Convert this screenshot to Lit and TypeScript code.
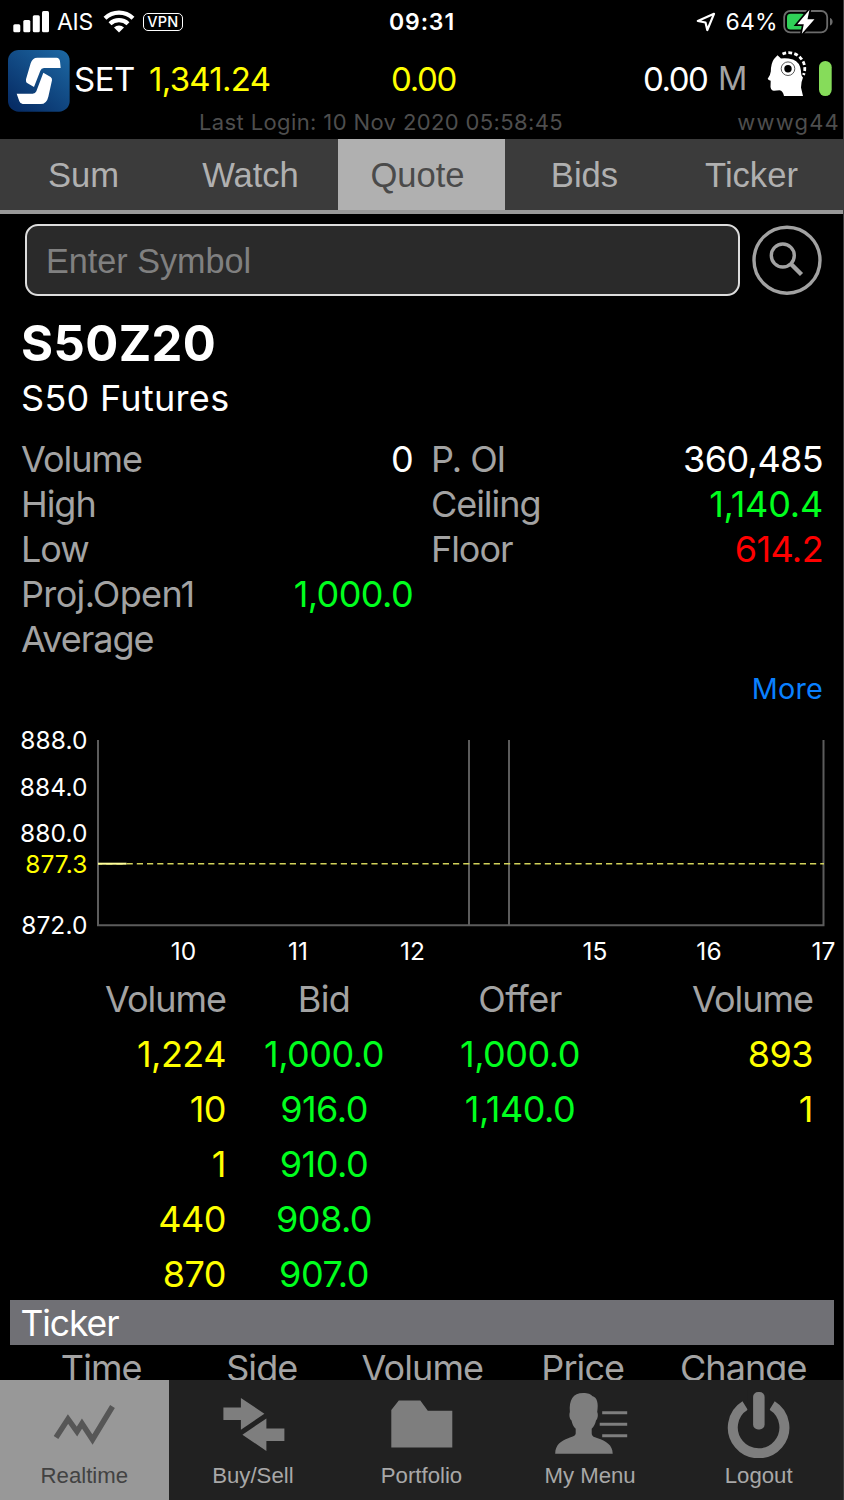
import { LitElement, html, css, svg } from "lit";
import { customElement } from "lit/decorators.js";

const tabs = ["Sum", "Watch", "Quote", "Bids", "Ticker"];

const leftStats = [
  ["Volume", "0", "white"],
  ["High", "", ""],
  ["Low", "", ""],
  ["Proj.Open1", "1,000.0", "up"],
  ["Average", "", ""],
];
const rightStats = [
  ["P. OI", "360,485", "white"],
  ["Ceiling", "1,140.4", "up loose"],
  ["Floor", "614.2", "down"],
];

const depth = [
  ["1,224", "1,000.0", "1,000.0", "893"],
  ["10", "916.0", "1,140.0", "1"],
  ["1", "910.0", "", ""],
  ["440", "908.0", "", ""],
  ["870", "907.0", "", ""],
];

const yTicks: [string, number, string][] = [
  ["888.0", 740.5, "#fff"],
  ["884.0", 787, "#fff"],
  ["880.0", 833, "#fff"],
  ["877.3", 864.5, "#ffff00"],
  ["872.0", 925.5, "#fff"],
];
const xTicks: [string, number][] = [
  ["10", 183.5],
  ["11", 298],
  ["12", 412.5],
  ["15", 595],
  ["16", 709],
  ["17", 823.5],
];

const navIcons = {
  realtime: svg`<path d="M56 1437.5L68 1419L77 1431.5L82 1423.5L92.500 1439.500L112.500 1406.500" fill="none" stroke="#565656" stroke-width="5.500"/>`,
  trade: svg`<path fill="#7e7e7e" d="M223 1407.500h17.500v-9.500l23.500 15.700l-23.500 16v-9.700h-17.500zM284 1428.500h-18v-10l-24 16.200l24 16.200v-10h18z"/>`,
  folder: svg`<path fill="#7e7e7e" d="M391.500 1447.500v-37.500l7.500-9.500h21.500l7.500 10.200h24.500v36.800z"/>`,
  user: svg`<path fill="#7e7e7e" d="M555 1453.700c0-9 6-13 13-15.500c5-1.800 7.500-2.500 7.500-5v-4.500c-2.500-2.200-3.500-5-4.200-8.200c-2-1.500-2.600-6-1.600-8.500c-1-12 3-19 13.300-19c5 0 7.500 1.200 9 3c5 1.500 6.500 7 5 16c1.300 2.500.5 7-1.200 8.500c-.8 3.500-2 5.800-4.300 8.200v4.500c0 3 2 3.700 6 5c8 2.700 15 6.500 15 15.500z"/><path stroke="#7e7e7e" stroke-width="3" d="M602 1412.700h25M599.500 1424.200h27.500M602 1435.700h25"/>`,
  power: svg`<path fill="none" stroke="#7e7e7e" stroke-width="10" d="M745.500 1405.500a25.800 25.800 0 1 0 27 0"/><path fill="#212121" d="M748 1390h22v28h-22z"/><rect x="753.500" y="1392" width="11.500" height="37.500" rx="5" fill="#7e7e7e"/>`,
};
const nav: [string, string, unknown][] = [
  ["Realtime", "0 1390 168 68", navIcons.realtime],
  ["Buy/Sell", "168.600 1390 168 68", navIcons.trade],
  ["Portfolio", "337.200 1390 168 68", navIcons.folder],
  ["My Menu", "505.800 1390 168 68", navIcons.user],
  ["Logout", "674.400 1390 168 68", navIcons.power],
];

@customElement("app-root")
export class AppRoot extends LitElement {
  static styles = css`
    :host { display: block; background: #000; }
    .screen {
      width: 844px; height: 1500px; box-sizing: border-box; overflow: hidden; border-right: 1px solid #3c3c3c;
      display: flex; flex-direction: column; background: #000; color: #fff;
      font-family: Inter, "Liberation Sans", sans-serif; font-size: 36px; white-space: nowrap;
    }
    svg { display: block; flex: none; }
    .status { height: 43px; display: grid; grid-template-columns: 1fr 1fr 1fr; align-items: center; font-size: 23px; flex: none; }
    .carrier { display: flex; align-items: center; padding-left: 13px; }
    .ais { margin-left: 8px; letter-spacing: -0.300px; }
    .wifi { margin-left: 10px; }
    .vpn { margin-left: 8px; width: 38px; height: 16px; border: 1.500px solid #fff; border-radius: 5px; font-size: 14.500px; line-height: 16px; font-weight: 500; text-align: center; letter-spacing: 0.300px; }
    .clock { padding-left: 1px; text-align: center; font-weight: 600; letter-spacing: 0.900px; }
    .power { display: flex; align-items: center; justify-content: flex-end; padding-right: 10px; }
    .pct { margin: 0 5px 0 9px; letter-spacing: 0.300px; }
    .market { height: 71px; display: flex; align-items: center; font-size: 33px; padding-left: 8px; flex: none; }
    .market span { line-height: 72px; }
    .logo { margin-top: 5px; }
    .head-icon { margin-bottom: 8px; }
    .set { margin-left: 4px; width: 75px; letter-spacing: -0.500px; }
    .index { width: 242px; color: #ffff00; letter-spacing: -0.700px; }
    .change { width: 252px; color: #ffff00; letter-spacing: -1.300px; }
    .value { width: 75px; letter-spacing: -1.500px; }
    .unit { width: 49px; color: #a3a3a3; font-size: 32.500px; }
    .login { height: 25px; display: flex; justify-content: space-between; padding: 0 3px 0 199px; line-height: 16px; font-size: 22px; color: #4e4e4e; flex: none; }
    .login-time { letter-spacing: 0.380px; }
    .host { letter-spacing: 1.200px; }
    .tabs { height: 71px; padding-left: 4px; background: #3b3b3b; border-bottom: 4px solid #989898; display: flex; font: 34.600px/72px "Liberation Sans", sans-serif; color: #b0b0b0; flex: none; }
    .tab { height: 71px; width: 159px; padding-right: 8px; text-align: center; }
    .tab.on { background: #b0b0b0; color: #4a4a4a; }
    .search { display: flex; align-items: center; padding: 10px 0 0 24.500px; gap: 12px; flex: none; }
    .field { width: 692px; height: 68px; padding-left: 19.500px; border: 2px solid #ddd; border-radius: 13px; background: #2a2a2a; color: #808080; font: 34.200px/70px "Liberation Sans", sans-serif; }
    .symbol { margin: 20px 0 0 21px; height: 56px; line-height: 56px; font-size: 49px; font-weight: 700; letter-spacing: 0.400px; flex: none; }
    .name { margin-left: 21px; height: 53px; line-height: 53px; letter-spacing: 0.300px; flex: none; }
    .stats { margin-top: 12px; padding: 0 21px; display: grid; grid-template-columns: 392px 392px; column-gap: 18px; height: 225px; flex: none; }
    .stat { display: flex; justify-content: space-between; height: 45px; line-height: 45px; color: #a3a3a3; letter-spacing: -0.600px; }
    .label { letter-spacing: -1.050px; }
    .label.wide { letter-spacing: -0.650px; }
    .loose { letter-spacing: -0.200px; }
    .more { height: 59px; line-height: 54px; text-align: right; padding-right: 20px; font-size: 28.800px; color: #0a80ff; letter-spacing: 0.200px; flex: none; }
    .chart text { font-size: 24.500px; letter-spacing: 0.100px; }
    .white { color: #fff; } .up { color: #00ff1e; } .down { color: #ff0000; }
    .depth { display: grid; grid-template-columns: 226px 196px 196px 195px; grid-auto-rows: 55px; line-height: 55px; flex: none; letter-spacing: -0.500px; }
    .head { color: #a3a3a3; letter-spacing: -1px; }
    .head.mid { letter-spacing: -0.600px; }
    .vol { text-align: right; } .mid { text-align: center; }
    .yellow { color: #ffff00; }
    .bar { margin: -2px 9.500px 0 10px; height: 45px; line-height: 46px; padding-left: 10.500px; background: #707075; letter-spacing: -1.100px; flex: none; }
    .ticker-title { font-size: 35.500px; }
    .cols { height: 35px; overflow: hidden; line-height: 46px; display: grid; grid-template-columns: repeat(5, 160.500px); padding-left: 21px; text-align: center; color: #a3a3a3; letter-spacing: -0.900px; flex: none; }
    .nav { height: 120px; display: grid; grid-template-columns: repeat(5, minmax(0, 1fr)); background: #212121; font: 22.200px/30px "Liberation Sans", sans-serif; color: #a8a8a8; text-align: center; flex: none; }
    .item { padding-top: 10px; }
    .item svg { width: 168px; margin: 0 0 3px; }
    .item.on { background: #989898; color: #424242; }
  `;

  private stat = ([label, value, tone]: string[]) =>
    html`<div class="stat"><span class="label ${label.length > 8 ? "wide" : ""}">${label}</span><span class=${tone}>${value}</span></div>`;

  render() {
    return html`<div class="screen">
      <div class="status">
        <div class="carrier">
          <svg width="36" height="22" viewBox="13 10 36 22" fill="#fff"><rect x="13.300" y="23.300" width="7" height="8" rx="1.500"/><rect x="23.300" y="19" width="7" height="12.300" rx="1.500"/><rect x="32.800" y="14.300" width="7" height="17" rx="1.500"/><rect x="42" y="10" width="7" height="21.300" rx="1.500"/></svg>
          <span class="ais">AIS</span>
          <svg class="wifi" width="32" height="23" viewBox="103 9 32 23" fill="none" stroke="#fff" stroke-width="4.200"><path d="M105 17.200a20.500 20.500 0 0 1 28 0"/><path d="M110 22.700a13 13 0 0 1 18 0"/><path d="M119 31.500l-5-5a7.500 7.500 0 0 1 10 0z" fill="#fff" stroke="none"/></svg>
          <span class="vpn">VPN</span>
        </div>
        <div class="clock">09:31</div>
        <div class="power">
          <svg width="20" height="22" viewBox="697 10 20 22"><path d="M698.800 20L715 12.800L708.300 29L706.500 21.500z" fill="none" stroke="#fff" stroke-width="2.200" stroke-linejoin="round"/></svg>
          <span class="pct">64%</span>
          <svg width="50" height="26" viewBox="783 8 50 26"><rect x="784.200" y="10" width="43" height="21.300" rx="6" fill="none" stroke="#6b6b6b" stroke-width="1.800"/><path d="M830 17c3.500 1 3.500 6.500 0 7.500z" fill="#6b6b6b"/><rect x="787" y="12.800" width="18" height="15.700" rx="3.500" fill="#30d158"/><path d="M809.500 8.800L797.300 23.300h6.500L801.800 32.800L814.500 18.300h-7z" fill="#fff" stroke="#000" stroke-width="3.400" paint-order="stroke"/></svg>
        </div>
      </div>
      <div class="market">
        <svg class="logo" width="62" height="62" viewBox="24 152 186 186"><defs><linearGradient id="g" x1="1" y1="0" x2="0.200" y2="1"><stop offset="0" stop-color="#1d69a4"/><stop offset="1" stop-color="#072d66"/></linearGradient></defs><rect x="24" y="152" width="185" height="185" rx="32" fill="url(#g)"/><path fill="#fff" d="M112 175H170Q178 175 180 186L182 206H132Q124 206 121 214L102 263L80 250Q77 247 78 240L92 192Q97 175 112 175zM130 220L152 233Q157 237 156 243L145 292Q140 314 122 314H68Q61 314 58 306L50 283H98Q106 283 109 276z"/></svg>
        <span class="set">SET</span><span class="index">1,341.24</span><span class="change">0.00</span><span class="value">0.00</span><span class="unit">M</span>
        <svg class="head-icon" width="70" height="50" viewBox="767 50 70 50"><path fill="#fff" d="M777.500 55.300L774 59Q771 63 770.800 71.500Q770.500 75 767.700 78.800Q768.200 80.500 770.700 80.700L770.500 87Q771 90.500 774 90.800L779.500 90.300Q783 91 784 96H803L801 87.500Q801 82 803 77.500Q801 76 801 71Q800 62 793 59.500Q786 57.500 781 58.500z"/><path d="M782.500 54a16 16 0 0 1 21 21" fill="none" stroke="#fff" stroke-width="2.800" stroke-dasharray="3.800 2.200"/><circle cx="788" cy="68.700" r="6.800" fill="#fff" stroke="#444" stroke-width="0.900"/><circle cx="788" cy="68.700" r="3.700" fill="#000"/><rect x="819" y="61" width="12.700" height="35" rx="6.300" fill="#86dc5a"/></svg>
      </div>
      <div class="login"><span class="login-time">Last Login: 10 Nov 2020 05:58:45</span><span class="host">wwwg44</span></div>
      <div class="tabs">${tabs.map((t) => html`<div class="tab ${t === "Quote" ? "on" : ""}">${t}</div>`)}</div>
      <div class="search">
        <div class="field">Enter Symbol</div>
        <svg width="70" height="72" viewBox="751.500 224.500 70 72" fill="none" stroke="#a2a2a2"><circle cx="786.500" cy="260.700" r="33" stroke-width="3.400"/><circle cx="782.300" cy="256" r="11.500" stroke-width="3.400"/><path d="M790.500 264.500L801 275" stroke-width="4.400"/></svg>
      </div>
      <div class="symbol">S50Z20</div>
      <div class="name">S50 Futures</div>
      <div class="stats"><div>${leftStats.map(this.stat)}</div><div>${rightStats.map(this.stat)}</div></div>
      <div class="more">More</div>
      <svg class="chart" width="843" height="251" viewBox="0 721 843 251">
        <g stroke="#5c5c5c" stroke-width="2" fill="none"><path d="M98 740V925.300H823.500V740M469 740V925M509 740V925"/></g>
        <path d="M98 863.700H824" stroke="#d2d25a" stroke-width="1.500" stroke-dasharray="6.200 4" stroke-dashoffset="2"/>
        <path d="M98 863.700H126.500" stroke="#ffff9a" stroke-width="2"/>
        ${yTicks.map(([t, y, c]) => svg`<text x="87.500" y=${y + 8.7} fill=${c} text-anchor="end">${t}</text>`)}
        ${xTicks.map(([t, x]) => svg`<text x=${x} y="959.500" fill="#fff" text-anchor="middle">${t}</text>`)}
      </svg>
      <div class="depth">
        <span class="head vol">Volume</span><span class="head mid">Bid</span><span class="head mid">Offer</span><span class="head vol">Volume</span>
        ${depth.map((r) => html`<span class="vol yellow">${r[0]}</span><span class="mid up">${r[1]}</span><span class="mid up">${r[2]}</span><span class="vol yellow">${r[3]}</span>`)}
      </div>
      <div class="bar"><span class="ticker-title">Ticker</span></div>
      <div class="cols">${["Time", "Side", "Volume", "Price", "Change"].map((t) => html`<span>${t}</span>`)}</div>
      <div class="nav">${nav.map(([t, box, icon], i) => html`<div class="item ${i === 0 ? "on" : ""}"><svg width="168" height="68" viewBox=${box}>${icon}</svg>${t}</div>`)}</div>
    </div>`;
  }
}
